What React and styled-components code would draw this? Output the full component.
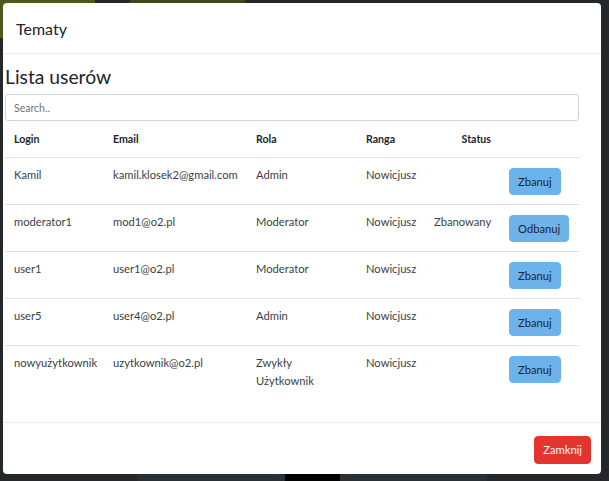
import React from "react";
import styled, { createGlobalStyle } from "styled-components";

const users = [
  { login: "Kamil", email: "kamil.klosek2@gmail.com", role: "Admin", rank: "Nowicjusz", banned: false },
  { login: "moderator1", email: "mod1@o2.pl", role: "Moderator", rank: "Nowicjusz", banned: true },
  { login: "user1", email: "user1@o2.pl", role: "Moderator", rank: "Nowicjusz", banned: false },
  { login: "user5", email: "user4@o2.pl", role: "Admin", rank: "Nowicjusz", banned: false },
  { login: "nowyużytkownik", email: "uzytkownik@o2.pl", role: "Zwykły Użytkownik", rank: "Nowicjusz", banned: false },
];

const GlobalStyle = createGlobalStyle`
  html, body {
    margin: 0;
    padding: 0;
  }
  body {
    background: #24282b;
    font-family: "Lato", "Noto Sans", sans-serif;
    color: #212529;
  }
`;

const Backdrop = styled.div`
  width: 609px;
  height: 481px;
  box-sizing: border-box;
  padding: 3px 8px 7px 3px;
  background:
    linear-gradient(#4d5a1c, #4d5a1c) 0 0 / 95px 38px no-repeat,
    linear-gradient(#3d4a16, #3d4a16) 130px 0 / 115px 4px no-repeat,
    linear-gradient(#000, #000) 285px 474px / 55px 7px no-repeat,
    linear-gradient(#2b3035, #2b3035) 137px 474px / 350px 7px no-repeat,
    #24282b;
`;

const Modal = styled.div`
  width: 598px;
  height: 471px;
  background: #fff;
  border-radius: 4px;
  display: flex;
  flex-direction: column;
  overflow: hidden;
`;

const Header = styled.div`
  height: 50px;
  flex-shrink: 0;
  display: flex;
  align-items: center;
  padding: 0 13px;
  border-bottom: 1px solid #e9ecef;
`;

const Title = styled.h5`
  margin: 0;
  font-size: 16px;
  font-weight: 400;
  color: #212529;
`;

const Body = styled.div`
  flex: 1;
  padding: 0 2px;
`;

const Content = styled.div`
  width: 574px;
`;

const Heading = styled.h3`
  margin: 10px 0 5px;
  font-size: 19.3px;
  line-height: 25px;
  font-weight: 400;
  color: #212529;
`;

const Search = styled.input`
  display: block;
  box-sizing: border-box;
  width: 100%;
  height: 27px;
  padding: 0 8px;
  border: 1px solid #ced4da;
  border-radius: 3px;
  font: inherit;
  font-size: 10.5px;
  color: #495057;
  outline: none;

  &::placeholder {
    color: #6c757d;
  }
`;

const Table = styled.table`
  width: 100%;
  table-layout: fixed;
  border-collapse: collapse;
  font-size: 11.2px;
  line-height: 18px;
`;

const Th = styled.th`
  height: 36px;
  box-sizing: border-box;
  padding: 0 9px;
  text-align: ${(p) => p.align || "left"};
  font-weight: 700;
  font-size: 10.6px;
  color: #212529;
  border-bottom: 1px solid #dee2e6;
  vertical-align: middle;
`;

const Row = styled.tr`
  border-bottom: ${(p) => (p.last ? "none" : "1px solid #dee2e6")};
`;

const Td = styled.td`
  padding: 8px 9px 10px;
  vertical-align: top;
  text-align: ${(p) => p.align || "left"};
  color: #3a3f44;
  white-space: ${(p) => (p.wrap ? "normal" : "nowrap")};
`;

const ButtonCell = styled.td`
  padding: 10px 9px 9px;
  vertical-align: top;
`;

const Button = styled.button`
  height: ${(p) => (p.danger ? "28px" : "27px")};
  padding: 0 8px;
  border: 1px solid ${(p) => (p.danger ? "#e3342f" : "#6cb2eb")};
  border-radius: 4px;
  background: ${(p) => (p.danger ? "#e3342f" : "#6cb2eb")};
  color: ${(p) => (p.danger ? "#fff" : "#212529")};
  font-family: inherit;
  font-size: 11.2px;
  cursor: pointer;
`;

const Footer = styled.div`
  height: 52px;
  flex-shrink: 0;
  box-sizing: border-box;
  border-top: 1px solid #e9ecef;
  display: flex;
  justify-content: flex-end;
  align-items: center;
  padding: 2px 10px 0;
`;

export default function App() {
  return (
    <>
      <GlobalStyle />
      <Backdrop>
        <Modal>
          <Header>
            <Title>Tematy</Title>
          </Header>
          <Body>
            <Content>
              <Heading>Lista userów</Heading>
              <Search placeholder="Search.." />
              <Table>
                <colgroup>
                  <col style={{ width: 99 }} />
                  <col style={{ width: 143 }} />
                  <col style={{ width: 110 }} />
                  <col style={{ width: 68 }} />
                  <col style={{ width: 75 }} />
                  <col style={{ width: 79 }} />
                </colgroup>
                <thead>
                  <tr>
                    <Th>Login</Th>
                    <Th>Email</Th>
                    <Th>Rola</Th>
                    <Th>Ranga</Th>
                    <Th align="right">Status</Th>
                    <Th />
                  </tr>
                </thead>
                <tbody>
                  {users.map((u, i) => (
                    <Row key={u.login} last={i === users.length - 1}>
                      <Td>{u.login}</Td>
                      <Td>{u.email}</Td>
                      <Td wrap>{u.role}</Td>
                      <Td>{u.rank}</Td>
                      <Td align="right">{u.banned ? "Zbanowany" : ""}</Td>
                      <ButtonCell>
                        <Button>{u.banned ? "Odbanuj" : "Zbanuj"}</Button>
                      </ButtonCell>
                    </Row>
                  ))}
                </tbody>
              </Table>
            </Content>
          </Body>
          <Footer>
            <Button danger>Zamknij</Button>
          </Footer>
        </Modal>
      </Backdrop>
    </>
  );
}
